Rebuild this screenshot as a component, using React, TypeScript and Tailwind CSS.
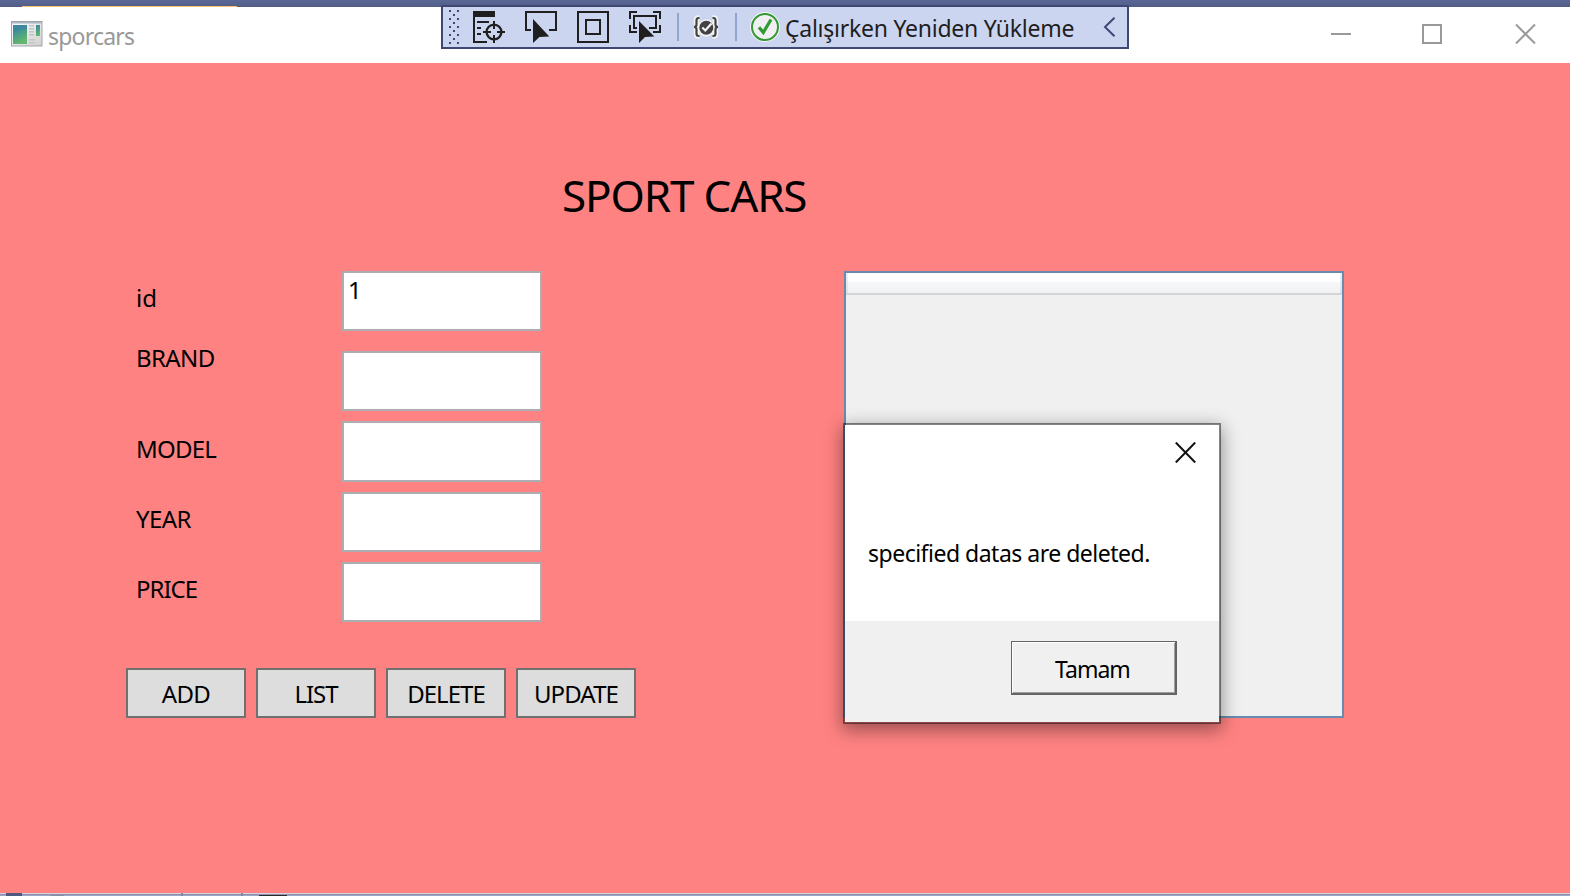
import React from "react";

const ink = "#1f1f1f";

function AppIcon() {
  return (
    <svg width="32" height="26" viewBox="0 0 32 26" className="shrink-0">
      <defs>
        <linearGradient id="pane" x1="0" y1="0" x2="0.4" y2="1">
          <stop offset="0" stopColor="#3f86a8" />
          <stop offset="0.5" stopColor="#469a8c" />
          <stop offset="1" stopColor="#63b86c" />
        </linearGradient>
        <linearGradient id="frame" x1="0" y1="0" x2="1" y2="1">
          <stop offset="0" stopColor="#ffffff" />
          <stop offset="1" stopColor="#cfcfcf" />
        </linearGradient>
      </defs>
      <rect x="0.5" y="0.5" width="30.5" height="24.5" fill="url(#frame)" stroke="#a3a5a8" />
      <rect x="1" y="1" width="30" height="1.5" fill="#a9b6c6" />
      <rect x="2" y="4" width="14" height="19" fill="url(#pane)" />
      <path d="M2 13Q8 8 16 8V4H2z" fill="#3b7fa6" opacity="0.5" />
      <g fill="#c4c4c4">
        <rect x="18" y="4" width="5" height="1.5" />
        <rect x="18" y="7" width="5" height="1.5" />
        <rect x="18" y="10" width="5" height="1.5" />
        <rect x="18" y="13" width="5" height="1.5" />
        <rect x="18" y="18" width="6" height="1.5" />
        <rect x="18" y="21" width="6" height="1.5" />
      </g>
      <rect x="25" y="4" width="4" height="11" fill="url(#pane)" />
    </svg>
  );
}

function Grip() {
  return (
    <svg width="10" height="34" viewBox="0 0 10 34" fill="#3f4775" shapeRendering="crispEdges">
      {[0, 8, 16, 24, 32].map((y) => (
        <path key={y} d={`M0 ${y}h2v2h-2zM8 ${y}h2v2h-2z`} />
      ))}
      {[4, 12, 20, 28].map((y) => (
        <path key={y} d={`M4 ${y}h2v2h-2z`} />
      ))}
    </svg>
  );
}

function LiveTreeIcon() {
  return (
    <svg width="32" height="32" viewBox="0 0 32 32" fill={ink}>
      <path d="M0 0h22v6H2v24h12v2H0zM4 10h12v2H4zM4 16h4v2H4zM4 22h4v2H4z" />
      <circle cx="21" cy="21" r="7.4" fill="none" stroke={ink} strokeWidth="2.4" />
      <path d="M20 10h2v8h-2zM20 24h2v8h-2zM10 20h8v2h-8zM24 20h8v2h-8z" />
    </svg>
  );
}

function SelectElementIcon() {
  return (
    <svg width="32" height="32" viewBox="0 0 32 32" fill={ink}>
      <path d="M0 0h32v20h-8v-2h6V2H2v16h4v2H0z" />
      <path d="M8 8L24.300 25.600L14.500 26L8 32z" />
    </svg>
  );
}

function AdornersIcon() {
  return (
    <svg width="32" height="32" viewBox="0 0 32 32" fill="none" stroke={ink} strokeWidth="2">
      <rect x="1" y="1" width="30" height="30" />
      <rect x="9" y="9" width="14" height="14" />
    </svg>
  );
}

function TrackFocusIcon() {
  return (
    <svg width="32" height="32" viewBox="0 0 32 32" fill={ink}>
      <path d="M0 0h8v2H2v6H0zM24 0h8v8h-2V2h-6zM0 14h2v6h6v2H0zM30 14h2v8h-8v-2h6z" />
      <path d="M4 4h24v14h-8v-2h6V6H6v10h2v2H4z" />
      <path d="M10 10L25.300 25.600L16 26L10 32z" />
    </svg>
  );
}

function BindingIcon() {
  const braces =
    "M7.500 3H6.500Q4.500 3 4.500 5.500V9.500Q4.500 12 2 12Q4.500 12 4.500 14.500V18.500Q4.500 21 6.500 21H7.500M20.500 3H21.500Q23.500 3 23.500 5.500V9.500Q23.500 12 26 12Q23.500 12 23.500 14.500V18.500Q23.500 21 21.500 21H20.500";
  return (
    <svg width="29" height="24" viewBox="0 0 29 24" fill="none">
      <path d={braces} stroke="#f3f3f3" strokeWidth="5.500" />
      <circle cx="14.300" cy="12.800" r="8.600" fill="#f3f3f3" />
      <path d={braces} stroke="#424242" strokeWidth="2.200" />
      <circle cx="14.300" cy="12.800" r="7" fill="#424242" />
      <path d="M10.300 12.500L13.300 15.500L19.500 8.500" stroke="#f3f3f3" strokeWidth="2.200" />
    </svg>
  );
}

function SuccessIcon() {
  return (
    <svg width="30" height="30" viewBox="0 0 30 30" fill="none">
      <circle cx="15" cy="15" r="15" fill="#f6f6f6" />
      <circle cx="15" cy="15" r="13" fill="#f0eff1" stroke="#339933" strokeWidth="2" />
      <path d="M9 15.200L13.300 20.500L21 7.500" stroke="#339933" strokeWidth="3.200" />
    </svg>
  );
}

function Divider() {
  return <div className="h-7 w-0.5 bg-[#93a5cf]" />;
}

function DebugToolbar() {
  return (
    <div className="absolute left-[441px] top-[5px] flex h-11 w-[688px] items-center border-2 border-[#3f4775] bg-[#ccd5f0] pl-1.5">
      <Grip />
      <div className="ml-[14px] flex gap-5">
        <LiveTreeIcon />
        <SelectElementIcon />
        <AdornersIcon />
        <TrackFocusIcon />
      </div>
      <div className="ml-4 flex items-center">
        <Divider />
        <div className="ml-[13px] mr-[14px]">
          <BindingIcon />
        </div>
        <Divider />
        <div className="ml-[13px]">
          <SuccessIcon />
        </div>
      </div>
      <span className="ml-[5px] mt-0.5 w-[318px] whitespace-nowrap text-[23px] leading-8 tracking-[-0.25px] text-[#1e1e1e]">
        Çalışırken Yeniden Yükleme
      </span>
      <svg width="13" height="20" viewBox="0 0 13 20" fill="none" stroke="#3f4775" strokeWidth="2">
        <path d="M11.500 0.800L2 10L11.500 19.200" />
      </svg>
    </div>
  );
}

function TitleBar() {
  return (
    <header className="flex h-14 items-start bg-white pl-[11px]">
      <div className="mt-3.5">
        <AppIcon />
      </div>
      <h1 className="ml-[5px] mt-[13px] text-[23px] leading-8 tracking-[-0.8px] text-[#999999]">sporcars</h1>
      <div className="ml-auto mr-[34px] mt-[17px] flex gap-[72px]">
        <svg width="20" height="20" viewBox="0 0 20 20" className="mr-[-1px]">
          <path d="M0 10h20" stroke="#999" strokeWidth="2" />
        </svg>
        <svg width="20" height="20" viewBox="0 0 20 20" fill="none" stroke="#999" strokeWidth="2">
          <rect x="1" y="1" width="18" height="18" />
        </svg>
        <svg width="21" height="20" viewBox="0 0 21 20" stroke="#999" strokeWidth="2" className="ml-px">
          <path d="M1 0.500L20 19.500M20 0.500L1 19.500" />
        </svg>
      </div>
    </header>
  );
}

const fields = [
  { name: "id", value: "1", row: "", box: "h-[60px]", label: "mt-[11px]" },
  { name: "BRAND", value: "", row: "mt-5", box: "h-[60px]", label: "-mt-[9px] tracking-[-0.6px]" },
  { name: "MODEL", value: "", row: "mt-2.5", box: "h-[61px]", label: "mt-3 tracking-[-0.8px]" },
  { name: "YEAR", value: "", row: "mt-2.5", box: "h-[60px]", label: "mt-[11px] tracking-[-0.6px]" },
  { name: "PRICE", value: "", row: "mt-2.5", box: "h-[60px]", label: "mt-[11px] tracking-[-1px]" },
];

const actions = [
  { name: "ADD", spacing: "tracking-[-0.6px]" },
  { name: "LIST", spacing: "tracking-[-1px]" },
  { name: "DELETE", spacing: "tracking-[-1px]" },
  { name: "UPDATE", spacing: "tracking-[-0.9px]" },
];

function CarForm() {
  return (
    <form className="w-[510px]" onSubmit={(e) => e.preventDefault()}>
      {fields.map((f) => (
        <div key={f.name} className={`flex items-start pl-2.5 ${f.row}`}>
          <label htmlFor={f.name} className={`w-[206px] text-[24px] leading-8 ${f.label}`}>
            {f.name}
          </label>
          <div className={`w-[200px] border-2 border-[#abadb3] bg-white ${f.box}`}>
            <input
              id={f.name}
              defaultValue={f.value}
              className="mt-px block h-8 w-full bg-transparent pl-1 text-[24px] leading-8 outline-none"
            />
          </div>
        </div>
      ))}
      <div className="mt-[46px] flex gap-2.5">
        {actions.map((a) => (
          <button
            key={a.name}
            type="button"
            className={`h-[50px] w-[120px] border-2 border-[#707070] bg-[#dddddd] pt-0.5 text-[24px] leading-8 ${a.spacing}`}
          >
            {a.name}
          </button>
        ))}
      </div>
    </form>
  );
}

function DataGrid() {
  return (
    <div className="h-[447px] w-[500px] border-2 border-[#688caf] bg-[#f0f0f0]">
      <div className="h-[22px] border-b-2 border-[#d5d5d5] bg-linear-to-b from-[#f0f0f0] to-[#e0e1e2] px-0.5">
        <div className="h-[9px] bg-white" />
        <div className="h-[11px] bg-linear-to-b from-[#f7f8fa] to-[#f1f2f4]" />
      </div>
    </div>
  );
}

function MessageDialog() {
  return (
    <div
      role="dialog"
      className="absolute left-[843px] top-[423px] flex h-[301px] w-[378px] flex-col border-2 border-black/45 bg-white bg-clip-padding shadow-[0_5px_17px_1px_rgba(0,0,0,0.4)]"
    >
      <div className="flex h-[196px] flex-col">
        <svg width="21" height="21" viewBox="0 0 21 21" stroke="#111" strokeWidth="2" className="ml-auto mr-[23px] mt-[17px]">
          <path d="M0.800 0.500L20.200 20.500M20.200 0.500L0.800 20.500" />
        </svg>
        <p className="ml-[23px] mt-[74px] whitespace-nowrap text-[23px] leading-8 tracking-[-0.5px]">
          specified datas are deleted.
        </p>
      </div>
      <div className="flex flex-1 justify-end bg-[#f0f0f0] pr-[42px] pt-5">
        <button className="h-[54px] w-[166px] border-b-2 border-l border-r-2 border-t border-[#646464] pr-0.5 pt-0.5 text-[23px] leading-8 tracking-[-1px] shadow-[inset_1px_1px_#fff,inset_-1px_-1px_#a0a0a0]">
          Tamam
        </button>
      </div>
    </div>
  );
}

export default function App() {
  return (
    <div className="relative flex h-[896px] w-[1570px] flex-col overflow-hidden font-['Noto_Sans',sans-serif] text-black">
      <div className="flex h-[7px] items-end bg-linear-to-b from-[#5a6796] to-[#525c86] pl-[22px]">
        <div className="h-px w-[215px] bg-[#f5c06f]" />
      </div>
      <TitleBar />
      <main className="h-[830px] bg-[#ff8282] pl-[126px] pt-[102px]">
        <h2 className="ml-[436px] text-[44px] leading-[60px] tracking-[-1.15px]">SPORT CARS</h2>
        <div className="mt-[46px] flex gap-[208px]">
          <CarForm />
          <DataGrid />
        </div>
      </main>
      <footer className="flex h-[3px] items-end border-t border-[#d8d2e0] bg-linear-to-b from-[#8e91a8] from-50% to-[#9ca6c6] to-50%">
        <div className="ml-1.5 h-[3px] w-4 bg-[#4f587f]" />
        <div className="ml-[29px] h-px w-[13px] bg-[#8590a3]" />
        <div className="ml-[117px] h-[3px] w-0.5 bg-[#8086a5]" />
        <div className="ml-[58px] h-[3px] w-0.5 bg-[#8086a5]" />
        <div className="ml-4 h-px w-7 bg-[#2b2b2b]" />
      </footer>
      <DebugToolbar />
      <MessageDialog />
    </div>
  );
}
